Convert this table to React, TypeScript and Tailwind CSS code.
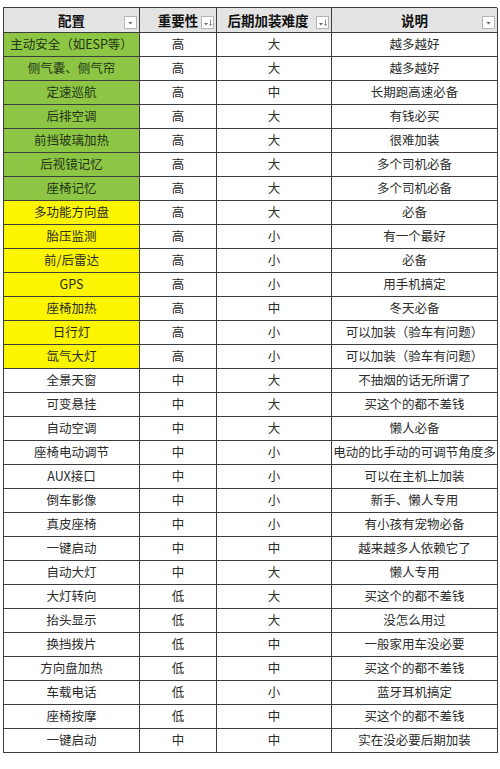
import React from 'react';

type Row = [string, string, string, string, 'g' | 'y' | 'w'];

const rows: Row[] = [
  ['主动安全（如ESP等）', '高', '大', '越多越好', 'g'],
  ['侧气囊、侧气帘', '高', '大', '越多越好', 'g'],
  ['定速巡航', '高', '中', '长期跑高速必备', 'g'],
  ['后排空调', '高', '大', '有钱必买', 'g'],
  ['前挡玻璃加热', '高', '大', '很难加装', 'g'],
  ['后视镜记忆', '高', '大', '多个司机必备', 'g'],
  ['座椅记忆', '高', '大', '多个司机必备', 'g'],
  ['多功能方向盘', '高', '大', '必备', 'y'],
  ['胎压监测', '高', '小', '有一个最好', 'y'],
  ['前/后雷达', '高', '小', '必备', 'y'],
  ['GPS', '高', '小', '用手机搞定', 'y'],
  ['座椅加热', '高', '中', '冬天必备', 'y'],
  ['日行灯', '高', '小', '可以加装（验车有问题）', 'y'],
  ['氙气大灯', '高', '小', '可以加装（验车有问题）', 'y'],
  ['全景天窗', '中', '大', '不抽烟的话无所谓了', 'w'],
  ['可变悬挂', '中', '大', '买这个的都不差钱', 'w'],
  ['自动空调', '中', '大', '懒人必备', 'w'],
  ['座椅电动调节', '中', '小', '电动的比手动的可调节角度多', 'w'],
  ['AUX接口', '中', '小', '可以在主机上加装', 'w'],
  ['倒车影像', '中', '小', '新手、懒人专用', 'w'],
  ['真皮座椅', '中', '小', '有小孩有宠物必备', 'w'],
  ['一键启动', '中', '中', '越来越多人依赖它了', 'w'],
  ['自动大灯', '中', '大', '懒人专用', 'w'],
  ['大灯转向', '低', '大', '买这个的都不差钱', 'w'],
  ['抬头显示', '低', '大', '没怎么用过', 'w'],
  ['换挡拨片', '低', '中', '一般家用车没必要', 'w'],
  ['方向盘加热', '低', '中', '买这个的都不差钱', 'w'],
  ['车载电话', '低', '小', '蓝牙耳机搞定', 'w'],
  ['座椅按摩', '低', '中', '买这个的都不差钱', 'w'],
  ['一键启动', '中', '中', '实在没必要后期加装', 'w'],
];

function FilterButton({ sort }: { sort?: boolean }) {
  return (
    <span className="absolute right-[2px] top-[8px] w-[13px] h-[13px] bg-white border border-[#b5b5b5] flex items-center justify-center">
      <svg width="11" height="11" viewBox="0 0 11 11">
        {sort ? (
          <>
            <path d="M2 6 L6 6 L4 8.5 Z" fill="#666" />
            <path d="M8.5 2.5 V8.5 M7.3 7 L8.5 8.5 L9.7 7" stroke="#777" strokeWidth="0.8" fill="none" />
          </>
        ) : (
          <path d="M3.5 5 L7.5 5 L5.5 7.5 Z" fill="#666" />
        )}
      </svg>
    </span>
  );
}

const cell = 'flex items-center justify-center border-r border-b border-[#3d3d3d] whitespace-nowrap overflow-hidden';

export default function App() {
  return (
    <div
      className="bg-white w-[500px] h-[769px] pt-[7px] pl-[3px]"
      style={{ fontFamily: '"Microsoft YaHei", "Noto Sans CJK SC", "Noto Sans", sans-serif' }}
    >
      <div className="grid grid-cols-[136px_77px_115px_166px] border-l border-t border-[#3d3d3d] w-[494px]">
        {[
          ['配置', false],
          ['重要性', true],
          ['后期加装难度', true],
          ['说明', false],
        ].map(([label, sort], i) => (
          <div key={i} className={`${cell} relative h-[25px] bg-[#e4e4e4] text-[13.5px] font-bold text-[#111]`}>
            <span className={i === 2 ? 'pr-[12px]' : ''}>{label as string}</span>
            <FilterButton sort={sort as boolean} />
          </div>
        ))}
        {rows.map(([name, imp, diff, note, c], i) => {
          const bg = c === 'g' ? 'bg-[#8dc644]' : c === 'y' ? 'bg-[#fbf500]' : 'bg-white';
          const tc = c === 'g' ? 'text-[#233318]' : 'text-[#2b2b2b]';
          return (
            <React.Fragment key={i}>
              <div className={`${cell} h-[24px] text-[12.5px] ${bg} ${tc}`}>{name}</div>
              <div className={`${cell} h-[24px] text-[12.5px] text-[#2b2b2b]`}>{imp}</div>
              <div className={`${cell} h-[24px] text-[12.5px] text-[#2b2b2b]`}>{diff}</div>
              <div className={`${cell} h-[24px] text-[12.5px] text-[#2b2b2b]`}>{note}</div>
            </React.Fragment>
          );
        })}
      </div>
    </div>
  );
}
